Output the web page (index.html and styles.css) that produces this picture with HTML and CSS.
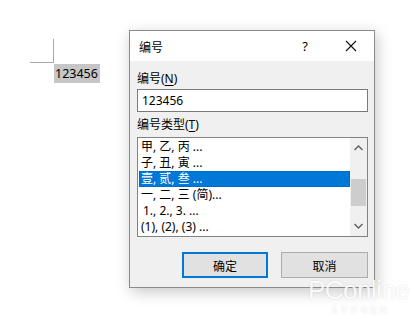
FILE: index.html
```html
<!DOCTYPE html>
<html>
  <head>
    <meta charset="UTF-8">
    <title>编号</title>
    <link rel="stylesheet" href="styles.css">
  </head>
  <body>
    <div class="doc">
      <div class="corner"></div>
      <span class="doc-text">123456</span>
    </div>

    <div class="dialog">
      <div class="titlebar">
        <span class="title">编号</span>
        <span class="help">?</span>
        <span class="close">
          <svg width="12" height="12" viewBox="0 0 12 12">
            <path d="M1 1 L11 11 M11 1 L1 11" stroke="#111" stroke-width="1.1" fill="none"/>
          </svg>
        </span>
      </div>

      <div class="body">
        <label class="label first">编号(<u>N</u>)</label>
        <div class="textbox">123456</div>

        <label class="label">编号类型(<u>T</u>)</label>
        <div class="listbox">
          <ul class="items">
            <li>甲, 乙, 丙 ...</li>
            <li>子, 丑, 寅 ...</li>
            <li class="selected">壹, 贰, 叁 ...</li>
            <li>一, 二, 三 (简)...</li>
            <li class="indent">1., 2., 3. ...</li>
            <li>(1), (2), (3) ...</li>
          </ul>
          <div class="scrollbar">
            <svg class="arrow" width="9" height="6" viewBox="0 0 9 6">
              <path d="M0.5 5 L4.5 1 L8.5 5" stroke="#606060" stroke-width="1.4" fill="none"/>
            </svg>
            <div class="track"><div class="thumb"></div></div>
            <svg class="arrow" width="9" height="6" viewBox="0 0 9 6">
              <path d="M0.5 1 L4.5 5 L8.5 1" stroke="#606060" stroke-width="1.4" fill="none"/>
            </svg>
          </div>
        </div>

        <div class="buttons">
          <button class="btn default">确定</button>
          <button class="btn">取消</button>
        </div>
      </div>
    </div>

    <div class="watermark">
      <div class="wm-big">PConline</div>
      <div class="wm-small">太 平 洋 电 脑 网</div>
    </div>
  </body>
</html>
```

FILE: styles.css
```css
body {
  margin: 0;
  width: 418px;
  height: 319px;
  background: #fff;
  font-family: "Noto Sans", "Noto Sans CJK SC", sans-serif;
  font-size: 12px;
  color: #000;
  position: relative;
  overflow: hidden;
}

.doc {
  padding: 39px 0 0 30px;
}

.corner {
  width: 23px;
  height: 23px;
  border-right: 1px solid #a8a8a8;
  border-bottom: 1px solid #a8a8a8;
}

.doc-text {
  display: inline-block;
  margin-left: 24px;
  margin-top: 1px;
  height: 19px;
  line-height: 19px;
  padding: 0 2px 0 1px;
  background: #c6c6c6;
  font-size: 12.5px;
}

.dialog {
  position: absolute;
  left: 129px;
  top: 30px;
  width: 244px;
  height: 256px;
  border: 1px solid #8a8a8a;
  background: #f0f0f0;
  box-shadow: 2px 4px 14px rgba(0, 0, 0, 0.22);
  display: flex;
  flex-direction: column;
}

.titlebar {
  height: 30px;
  background: #fff;
  display: flex;
  align-items: center;
  font-family: "Noto Sans CJK SC", sans-serif;
}

.title {
  flex: 1;
  padding-left: 9px;
  font-size: 12px;
}

.help {
  font-family: "Noto Sans", sans-serif;
  font-size: 13px;
  width: 14px;
  text-align: center;
  margin-right: 16px;
}

.close {
  width: 46px;
  display: flex;
  justify-content: center;
}

.body {
  flex: 1;
  padding: 0 6px 9px 7px;
  display: flex;
  flex-direction: column;
}

.label {
  display: block;
  line-height: 16px;
  height: 16px;
  margin-top: 5px;
}

.label.first {
  margin-top: 10px;
}

.label u {
  text-underline-offset: 2px;
}

.textbox {
  margin-top: 2px;
  height: 21px;
  line-height: 21px;
  border: 1px solid #7a7a7a;
  background: #fff;
  padding-left: 4px;
}

.listbox {
  margin-top: 4px;
  height: 98px;
  border: 1px solid #828282;
  background: #fff;
  display: flex;
}

.items {
  list-style: none;
  margin: 0;
  padding: 1px 0 0 1px;
  flex: 1;
}

.items li {
  height: 16px;
  line-height: 16px;
  padding-left: 2px;
  white-space: nowrap;
}

.items li.indent {
  padding-left: 4px;
}

.items li.selected {
  background: #0078d7;
  color: #fff;
  outline: 1px dotted #4a4a4a;
  outline-offset: -1px;
}

.scrollbar {
  width: 17px;
  background: #f0f0f0;
  display: flex;
  flex-direction: column;
  align-items: center;
}

.arrow {
  margin: 7px 0;
}

.track {
  flex: 1;
  width: 15px;
}

.thumb {
  margin-top: 21px;
  height: 27px;
  background: #cdcdcd;
}

.buttons {
  margin-top: 15px;
  display: flex;
  justify-content: flex-end;
  gap: 13px;
}

.btn {
  width: 87px;
  height: 26px;
  background: #e1e1e1;
  border: 1px solid #adadad;
  font-family: "Noto Sans CJK SC", sans-serif;
  font-size: 12px;
  color: #000;
  padding: 0;
}

.btn.default {
  width: 86px;
  border: 2px solid #0078d7;
}

.watermark {
  position: absolute;
  left: 308px;
  top: 278px;
  color: rgba(255, 255, 255, 0.9);
  text-shadow: 0 0 2px rgba(0, 0, 0, 0.12);
  text-align: center;
  font-family: "Liberation Sans", sans-serif;
}

.wm-big {
  font-size: 26px;
  letter-spacing: -0.5px;
  line-height: 24px;
  height: 24px;
}

.wm-small {
  margin-top: 3px;
  font-family: "Noto Sans CJK SC", sans-serif;
  font-size: 8px;
  line-height: 10px;
}
```
